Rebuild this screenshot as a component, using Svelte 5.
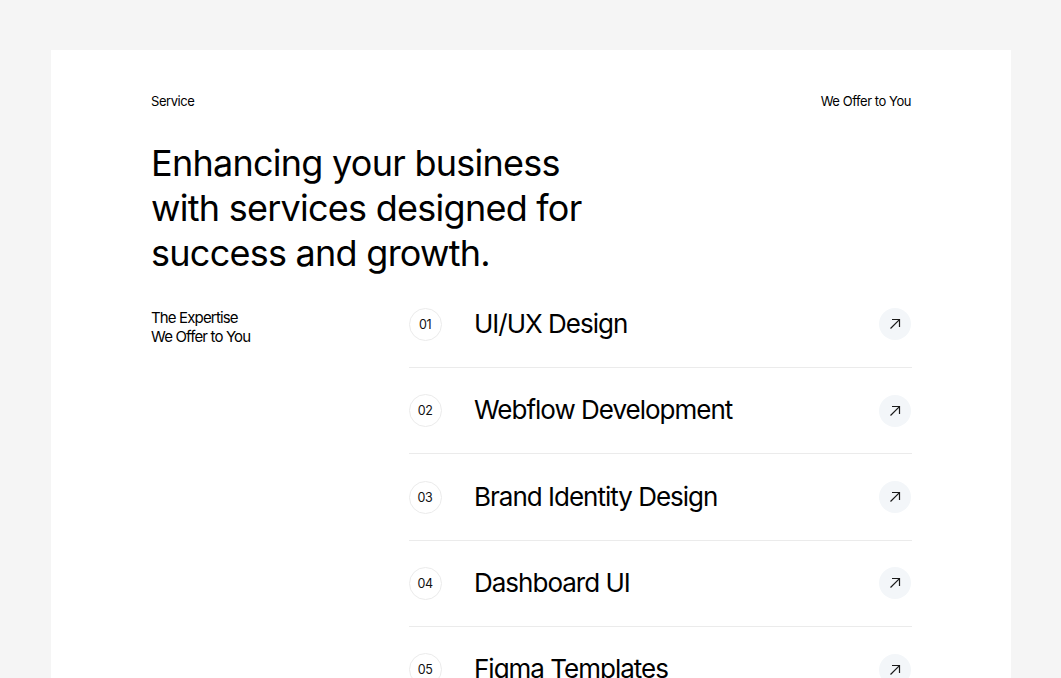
<script lang="ts">
  const services = [
    { num: '01', title: 'UI/UX Design' },
    { num: '02', title: 'Webflow Development' },
    { num: '03', title: 'Brand Identity Design' },
    { num: '04', title: 'Dashboard UI' },
    { num: '05', title: 'Figma Templates' }
  ];
</script>

<div class="page">
  <section class="card">
    <div class="top">
      <span>Service</span>
      <span>We Offer to You</span>
    </div>

    <h1>Enhancing your business<br />with services designed for<br />success and growth.</h1>

    <div class="body">
      <p class="side">The Expertise<br />We Offer to You</p>
      <ul class="list">
        {#each services as s}
          <li class="row">
            <span class="num">{s.num}</span>
            <span class="title">{s.title}</span>
            <span class="go">
              <svg width="12" height="12" viewBox="0 0 12 12" fill="none">
                <path d="M1.5 10.5 L10.2 1.8 M3 1.5 H10.5 V9" stroke="#1a1a1a" stroke-width="1.2" />
              </svg>
            </span>
          </li>
        {/each}
      </ul>
    </div>
  </section>
</div>

<style>
  :global(body) {
    background: #f5f5f5;
    overflow: hidden;
  }

  .page {
    height: 678px;
    overflow: hidden;
    padding: 50px 50px 0 51px;
    box-sizing: border-box;
    font-family: Inter, "Liberation Sans", sans-serif;
    color: #000;
  }

  .card {
    background: #fff;
    padding: 43px 100px 0;
    height: 800px;
  }

  .top {
    display: flex;
    justify-content: space-between;
    font-size: 13px;
    line-height: 16px;
    letter-spacing: -0.45px;
  }

  h1 {
    margin: 32px 0 0;
    font-size: 36px;
    line-height: 45px;
    font-weight: 400;
    letter-spacing: -0.74px;
  }

  .body {
    display: grid;
    grid-template-columns: 258px 1fr;
    margin-top: 5.6px;
  }

  .side {
    margin: 26px 0 0;
    font-size: 15px;
    line-height: 19.5px;
    letter-spacing: -0.85px;
  }

  .list {
    list-style: none;
    margin: 0 -1px 0 0;
    padding: 0;
  }

  .row {
    display: flex;
    align-items: center;
    height: 86.4px;
    border-bottom: 1px solid #ebebeb;
    box-sizing: border-box;
    padding-right: 1px;
  }

  .num {
    width: 30px;
    height: 31px;
    padding-right: 1px;
    border: 1px solid #ebebeb;
    border-radius: 50%;
    display: flex;
    align-items: center;
    justify-content: center;
    font-size: 12.5px;
    letter-spacing: -0.4px;
    color: #111;
    flex: none;
  }

  .title {
    margin: -1px 0 0 32px;
    flex: 1;
    font-size: 26px;
    letter-spacing: -1px;
    line-height: 32px;
  }

  .go {
    width: 32px;
    height: 32px;
    border-radius: 50%;
    background: #f3f6f9;
    display: flex;
    align-items: center;
    justify-content: center;
    flex: none;
  }
</style>
